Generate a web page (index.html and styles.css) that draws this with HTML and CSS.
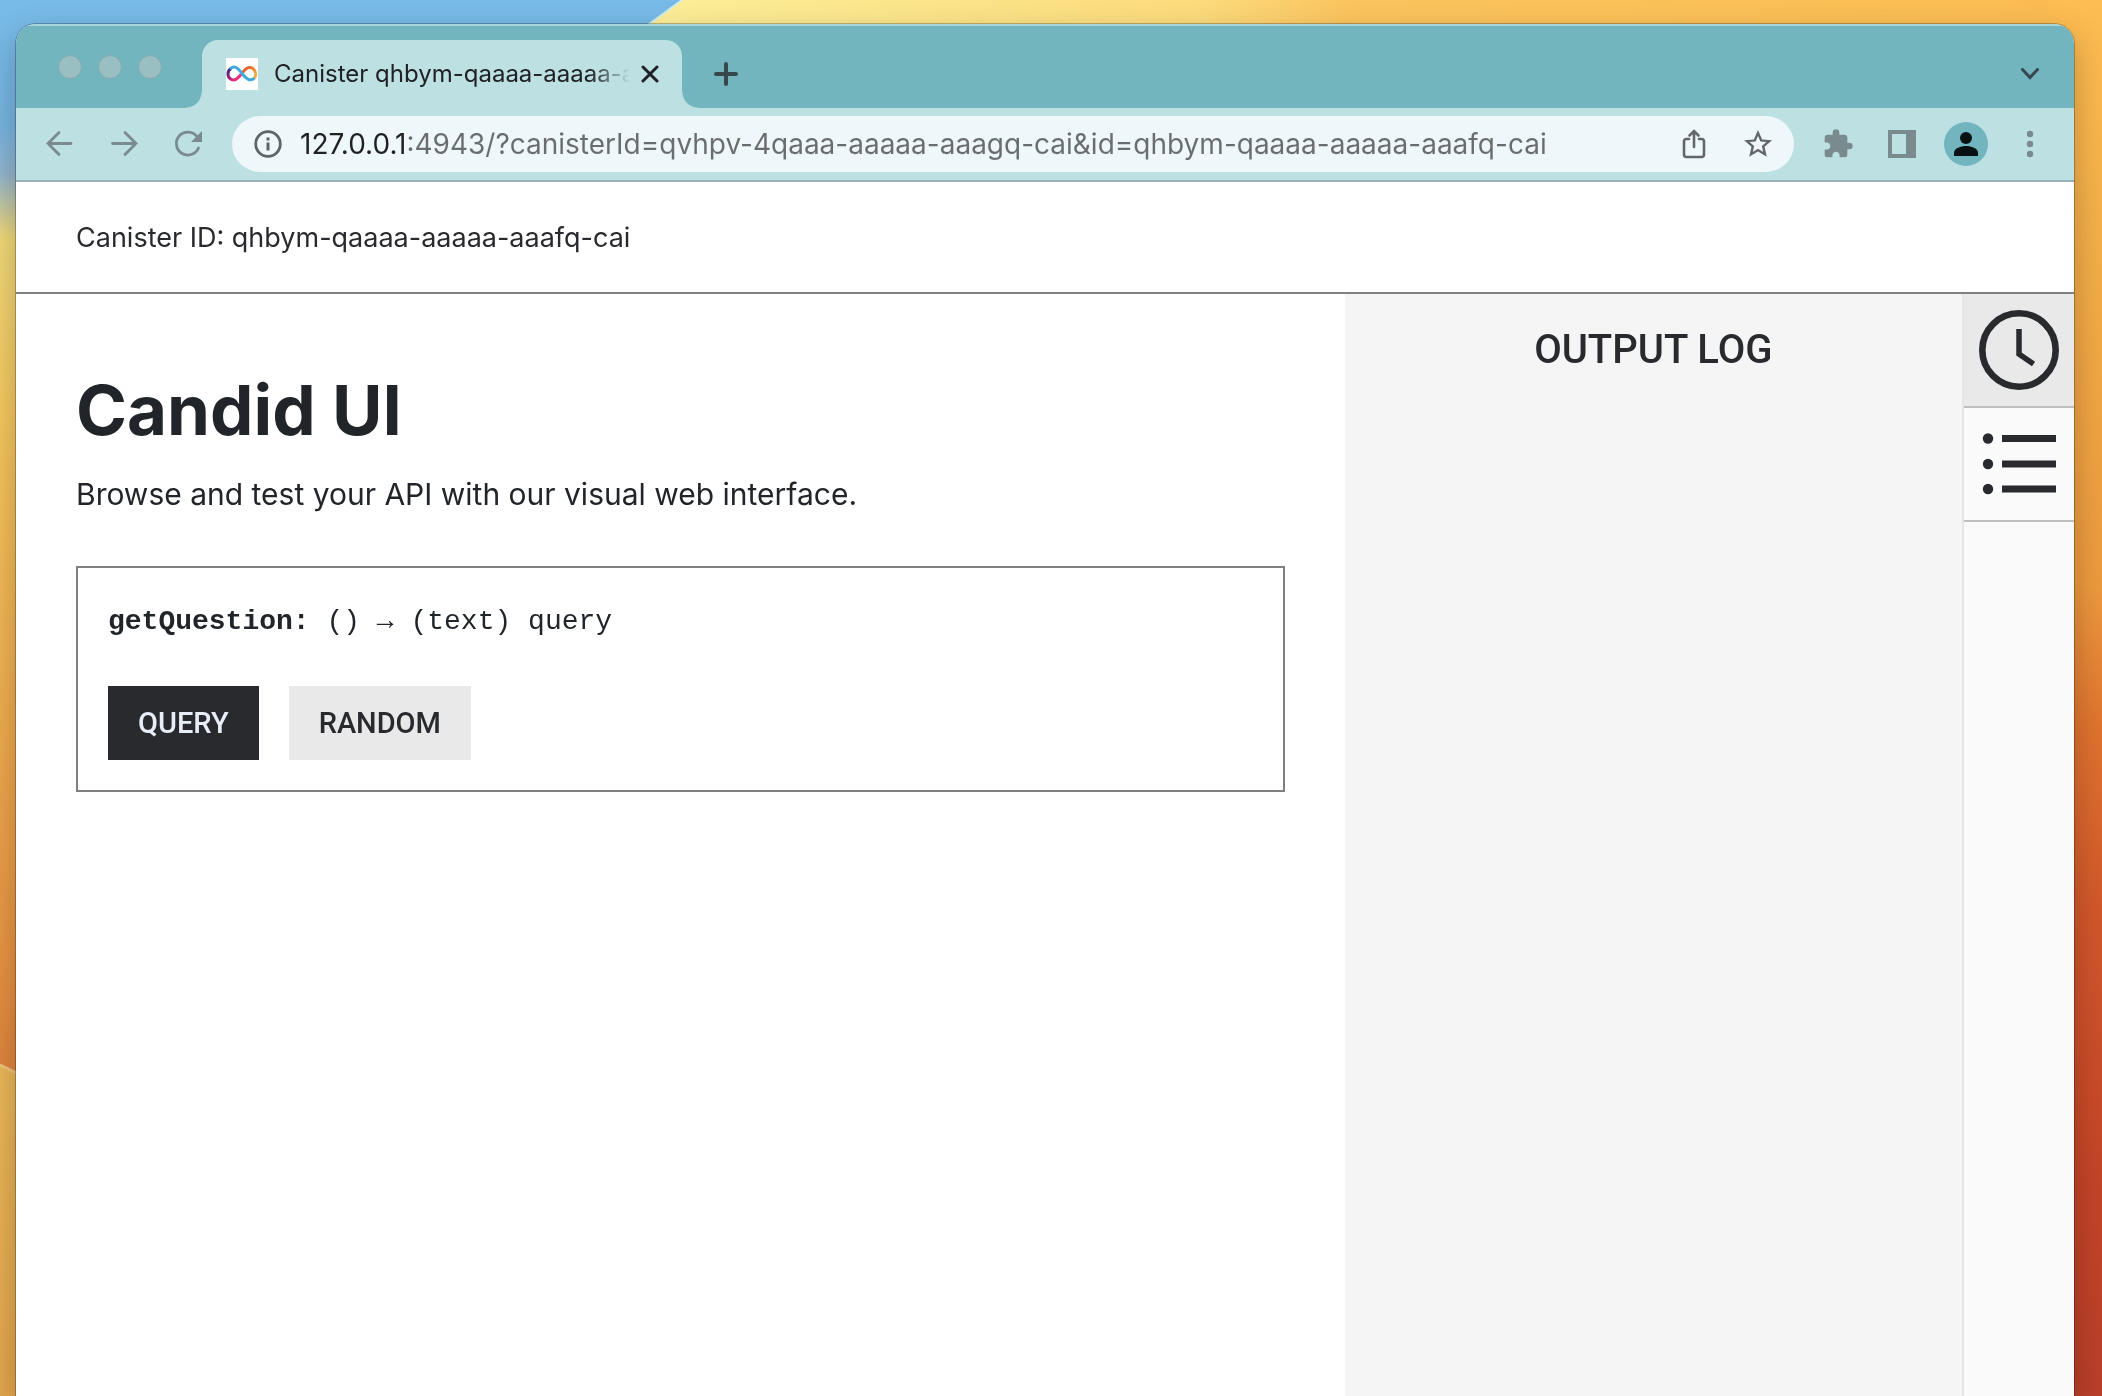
FILE: index.html
```html
<!DOCTYPE html>
<html lang="en">
<head>
<meta charset="utf-8">
<title>Candid UI</title>
<link rel="stylesheet" href="styles.css">
</head>
<body class="desktop">
<svg class="wallpaper" viewBox="0 0 2102 1396" preserveAspectRatio="none" aria-hidden="true">
  <defs>
    <linearGradient id="sky" x1="0" y1="0" x2="0" y2="1">
      <stop offset="0" stop-color="#78bbe9"/>
      <stop offset="0.09" stop-color="#76b4e0"/>
      <stop offset="0.125" stop-color="#93b5cd"/>
      <stop offset="0.17" stop-color="#f0d878"/>
      <stop offset="0.3" stop-color="#f5c65e"/>
      <stop offset="0.5" stop-color="#efae50"/>
      <stop offset="0.68" stop-color="#e89443"/>
      <stop offset="0.77" stop-color="#df833c"/>
    </linearGradient>
    <linearGradient id="sun" x1="0" y1="0" x2="1" y2="0">
      <stop offset="0" stop-color="#fcf09a"/>
      <stop offset="0.4" stop-color="#fcdb7c"/>
      <stop offset="0.5" stop-color="#fbc45e"/>
      <stop offset="1" stop-color="#fbbc52"/>
    </linearGradient>
    <linearGradient id="dusk" x1="0" y1="0" x2="0" y2="1">
      <stop offset="0" stop-color="#fdbd52"/>
      <stop offset="0.22" stop-color="#f2ab46"/>
      <stop offset="0.42" stop-color="#ed9a3e"/>
      <stop offset="0.52" stop-color="#e0742f"/>
      <stop offset="0.65" stop-color="#d2582b"/>
      <stop offset="0.85" stop-color="#c44428"/>
      <stop offset="1" stop-color="#ba3f2a"/>
    </linearGradient>
    <linearGradient id="sand" x1="0" y1="0" x2="0" y2="1">
      <stop offset="0" stop-color="#eab758"/>
      <stop offset="1" stop-color="#e3a64d"/>
    </linearGradient>
  </defs>
  <rect width="2102" height="1396" fill="url(#sky)"/>
  <path d="M682 0H2102V60H600z" fill="url(#sun)"/>
  <path d="M682 0L600 60" stroke="#cfeeea" stroke-width="2"/>
  <rect x="2050" width="52" height="1396" fill="url(#dusk)"/>
  <path d="M0 1064L40 1083V1396H0z" fill="url(#sand)"/>
  <path d="M0 1065L40 1084" stroke="#efc478" stroke-width="3"/>
</svg>

<div class="window">
  <div class="tabstrip">
    <div class="lights" aria-hidden="true"><span class="light"></span><span class="light"></span><span class="light"></span></div>
    <div class="tab">
      <svg class="favicon" viewBox="0 0 32 32" aria-hidden="true">
        <defs>
          <linearGradient id="loopL" x1="0" y1="0" x2="1" y2="1"><stop offset="0.1" stop-color="#4a2585"/><stop offset="0.75" stop-color="#ea2c7c"/></linearGradient>
          <linearGradient id="loopR" x1="0" y1="0" x2="1" y2="1"><stop offset="0.2" stop-color="#e8602c"/><stop offset="0.8" stop-color="#f3ae42"/></linearGradient>
        </defs>
        <rect width="32" height="32" fill="#fff"/>
        <g fill="none" stroke-width="3">
          <path d="M5 10.500C1 13 1 19 5 21.300C9 23.500 12 20 15 16.500" stroke="url(#loopL)"/>
          <path d="M16.500 14.500C20 10 23 8 26.500 10.300C30.500 13 30.500 18 28 20.500" stroke="url(#loopR)"/>
          <path d="M4 11C8 6.500 12 10 16 15.500C20 21 24.500 24 28.500 20" stroke="#3fa9dc"/>
        </g>
      </svg>
      <span class="tab-title">Canister qhbym-qaaaa-aaaaa-aaafq-cai</span>
      <button class="tab-close" aria-label="Close tab">
        <svg width="18" height="18" viewBox="0 0 18 18"><path d="M2 2L16 16M16 2L2 16" stroke="#202124" stroke-width="3" stroke-linecap="round"/></svg>
      </button>
    </div>
    <button class="tool" aria-label="New tab">
      <svg width="24" height="24" viewBox="0 0 24 24"><path d="M12 2V22M2 12H22" stroke="#37474c" stroke-width="4" stroke-linecap="round"/></svg>
    </button>
    <button class="tool tab-search" aria-label="Search tabs">
      <svg width="18" height="12" viewBox="0 0 18 12"><path d="M1.500 1.500L9 9.500L16.500 1.500" fill="none" stroke="#37474c" stroke-width="3" stroke-linecap="round"/></svg>
    </button>
  </div>

  <div class="toolbar">
    <button class="tool" aria-label="Back">
      <svg width="28" height="28" viewBox="0 0 28 28"><path d="M25 13.500H2M13 2.500L2 13.500L13 24.500" fill="none" stroke="#7a8b8f" stroke-width="2.800" stroke-linecap="round"/></svg>
    </button>
    <button class="tool" aria-label="Forward">
      <svg width="28" height="28" viewBox="0 0 28 28"><path d="M2.500 13.500H26M15 2.500L26 13.500L15 24.500" fill="none" stroke="#7a8b8f" stroke-width="2.800" stroke-linecap="round"/></svg>
    </button>
    <button class="tool" aria-label="Reload">
      <svg width="28" height="28" viewBox="0 0 28 28"><path d="M23 6.500A11.500 11.500 0 1 0 24.500 18" fill="none" stroke="#7a8b8f" stroke-width="2.800" stroke-linecap="round"/><path d="M28 1V12H17z" fill="#7a8b8f"/></svg>
    </button>
    <div class="omnibox">
      <button class="site-info" aria-label="View site information">
        <svg width="28" height="28" viewBox="0 0 28 28"><circle cx="14" cy="14" r="12.300" fill="none" stroke="#5f6468" stroke-width="2.800"/><path d="M12.500 7.500h3v3h-3zM12.500 12.500h3v8h-3z" fill="#5f6468"/></svg>
      </button>
      <input class="url" type="text" aria-label="Address" spellcheck="false" value="127.0.0.1:4943/?canisterId=qvhpv-4qaaa-aaaaa-aaagq-cai&amp;id=qhbym-qaaaa-aaaaa-aaafq-cai">
      <button class="tool" aria-label="Share this page">
        <svg width="24" height="30" viewBox="0 0 24 30"><path d="M7 10H4.500Q2 10 2 12.500V25.500Q2 28 4.500 28H19.500Q22 28 22 25.500V12.500Q22 10 19.500 10H17M12 18V2.500M7.500 6.500L12 2L16.500 6.500" fill="none" stroke="#63666a" stroke-width="2.600" stroke-linecap="round"/></svg>
      </button>
      <button class="tool" aria-label="Bookmark this tab">
        <svg width="32" height="32" viewBox="0 0 24 24"><path d="M22.500 9.240l-7.400-.64L12 1.500 8.900 8.610l-7.400.63 5.600 4.870L5.420 21.500 12 17.570l6.580 3.930-1.670-7.390 5.590-4.870zM12 15.600l-3.900 2.350 1.040-4.450-3.440-2.980 4.540-.4L12 5.900l1.770 4.230 4.540.4-3.440 2.980 1.040 4.450L12 15.600z" fill="#63666a"/></svg>
      </button>
    </div>
    <button class="tool" aria-label="Extensions">
      <svg width="32" height="32" viewBox="0 0 24 24"><path d="M20.500 11H19V7c0-1.100-.9-2-2-2h-4V3.500a2.500 2.500 0 0 0-5 0V5H4c-1.100 0-1.990.9-1.990 2v3.800H3.500c1.490 0 2.700 1.210 2.700 2.700s-1.210 2.700-2.700 2.700H2V20c0 1.100.9 2 2 2h3.800v-1.500c0-1.490 1.210-2.700 2.700-2.700s2.700 1.210 2.700 2.700V22H17c1.100 0 2-.9 2-2v-4h1.500a2.500 2.500 0 0 0 0-5z" fill="#7a8b8f"/></svg>
    </button>
    <button class="tool" aria-label="Side panel">
      <svg width="28" height="28" viewBox="0 0 28 28"><path d="M0 0H28V28H0zM4 4V24H18V4z" fill="#7a8b8f" fill-rule="evenodd"/></svg>
    </button>
    <button class="tool" aria-label="Profile">
      <svg width="44" height="44" viewBox="0 0 44 44"><circle cx="22" cy="22" r="22" fill="#72b5bf"/><circle cx="22" cy="16" r="6" fill="#081214"/><path d="M10 34V31C10 26 17 24 22 24S34 26 34 31V34z" fill="#081214"/></svg>
    </button>
    <button class="tool" aria-label="Menu">
      <svg width="8" height="28" viewBox="0 0 8 28"><g fill="#7a8b8f"><circle cx="4" cy="4" r="3.200"/><circle cx="4" cy="14" r="3.200"/><circle cx="4" cy="24" r="3.200"/></g></svg>
    </button>
  </div>

  <header class="canister">Canister ID: qhbym-qaaaa-aaaaa-aaafq-cai</header>

  <div class="page">
    <main class="main">
      <h1 class="title">Candid UI</h1>
      <p class="lead">Browse and test your API with our visual web interface.</p>
      <section class="method">
        <div class="signature"><b>getQuestion:</b> () → (text) query</div>
        <div class="actions">
          <button class="btn btn-query">QUERY</button>
          <button class="btn">RANDOM</button>
        </div>
      </section>
    </main>
    <aside class="log">
      <h2 class="log-title">OUTPUT LOG</h2>
    </aside>
    <nav class="rail" aria-label="Panels">
      <button class="rail-btn rail-active" aria-label="Output log">
        <svg width="80" height="80" viewBox="0 0 80 80"><circle cx="40" cy="40" r="36.700" fill="none" stroke="#292a2e" stroke-width="6.600"/><path d="M40 19V44L54.500 54" fill="none" stroke="#292a2e" stroke-width="5.500"/></svg>
      </button>
      <button class="rail-btn" aria-label="Methods">
        <svg width="80" height="80" viewBox="0 0 80 80"><g fill="#292a2e"><circle cx="9" cy="14.500" r="5.200"/><circle cx="9" cy="40" r="5.200"/><circle cx="9" cy="65" r="5.200"/><path d="M23 11H77V18H23zM23 36.500H77V43.500H23zM23 61.500H77V68.500H23z"/></g></svg>
      </button>
    </nav>
  </div>
</div>
</body>
</html>
```
FILE: styles.css
```css
* {
  box-sizing: border-box;
}

.desktop {
  display: flex;
  min-height: 100vh;
  margin: 0;
  padding: 24px 28px 0 16px;
  background: #efae50;
  color: #212529;
  font-family: Inter, "Liberation Sans", sans-serif;
}

.wallpaper {
  position: fixed;
  inset: 0;
  z-index: -1;
  width: 100%;
  height: 100%;
}

button {
  display: flex;
  align-items: center;
  justify-content: center;
  margin: 0;
  padding: 0;
  border: 0;
  background: none;
  color: inherit;
  font: inherit;
}

/* Browser window */

.window {
  display: flex;
  flex: 1;
  flex-direction: column;
  min-width: 0;
  overflow: hidden;
  border-radius: 20px 20px 0 0;
  background: #fff;
  box-shadow: 0 0 0 1px rgba(0, 0, 0, 0.25), 0 12px 32px rgba(0, 0, 0, 0.25);
}

.tabstrip {
  display: flex;
  align-items: flex-end;
  height: 84px;
  padding: 0 12px 0 42px;
  background: #72b5bf;
  box-shadow: inset 0 2px #a9d5d9;
}

.lights {
  display: flex;
  gap: 16px;
  width: 144px;
  padding-bottom: 29px;
}

.light {
  width: 24px;
  height: 24px;
  border: 1px solid #83a9ad;
  border-radius: 50%;
  background: #99bfc3;
}

.tab {
  position: relative;
  display: flex;
  align-items: center;
  width: 480px;
  height: 68px;
  padding: 0 16px 0 24px;
  border-radius: 16px 16px 0 0;
  background: #bde0e2;
}

.tab::before,
.tab::after {
  content: "";
  position: absolute;
  bottom: 0;
  width: 16px;
  height: 16px;
}

.tab::before {
  right: 100%;
  background: radial-gradient(circle at 0 0, #72b5bf 15px, #bde0e2 16px);
}

.tab::after {
  left: 100%;
  background: radial-gradient(circle at 100% 0, #72b5bf 15px, #bde0e2 16px);
}

.favicon {
  flex: none;
  width: 32px;
  height: 32px;
}

.tab-title {
  flex: 1;
  overflow: hidden;
  margin: 0 4px 0 16px;
  color: #202124;
  font-size: 24px;
  line-height: 32px;
  white-space: nowrap;
  -webkit-mask-image: linear-gradient(to left, transparent, #000 40px);
  mask-image: linear-gradient(to left, transparent, #000 40px);
}

.tab-close {
  width: 32px;
  height: 32px;
}

.tool {
  flex: none;
  width: 64px;
  height: 56px;
}

.tabstrip .tool {
  height: 68px;
  margin-left: 12px;
}

.tabstrip .tab-search {
  margin-left: auto;
}

.toolbar {
  display: flex;
  align-items: center;
  height: 74px;
  padding: 0 12px;
  border-bottom: 2px solid #98b1b6;
  background: #bde0e2;
}

.omnibox {
  display: flex;
  flex: 1;
  align-items: center;
  min-width: 0;
  height: 56px;
  margin: 0 12px;
  padding: 0 4px 0 16px;
  border-radius: 28px;
  background: #eef7f9;
}

.site-info {
  flex: none;
  width: 40px;
  height: 40px;
}

/* The host part of the address is darker than the path. */
.url {
  flex: 1;
  min-width: 0;
  height: 40px;
  margin: 0 0 0 12px;
  padding: 0;
  border: 0;
  outline: 0;
  background: linear-gradient(to right, #202124 107px, #696d70 107px);
  -webkit-background-clip: text;
  background-clip: text;
  color: #696d70;
  font: 28px/40px Inter, "Liberation Sans", sans-serif;
  -webkit-text-fill-color: transparent;
}

/* Candid page */

.canister {
  padding: 36px 60px 34px;
  border-bottom: 2px solid #808083;
  color: #292a2e;
  font-size: 27px;
  line-height: 40px;
}

.page {
  display: flex;
  flex: 1;
}

.main {
  flex: 1;
  min-width: 0;
  padding: 76px 60px 60px;
}

.title {
  margin: 0 0 20px;
  font-size: 69px;
  font-weight: 700;
  line-height: 80px;
}

.lead {
  margin: 0 0 48px;
  font-size: 30px;
  line-height: 48px;
}

.method {
  padding: 30px;
  border: 2px solid #808083;
}

.signature {
  margin-bottom: 40px;
  font-family: "Liberation Mono", monospace;
  font-size: 28px;
  line-height: 48px;
}

.actions {
  display: flex;
  gap: 30px;
}

.btn {
  height: 74px;
  padding: 0 30px;
  background: #e9e9e9;
  color: #292a2e;
  font: 500 29px/32px Roboto, sans-serif;
}

.btn-query {
  background: #292a2e;
  color: #e8edfa;
}

.log {
  flex: 0 0 30%;
  padding: 32px 40px;
  background: #f5f5f5;
}

.log-title {
  margin: 0;
  color: #292a2e;
  font: 500 40px/48px Roboto, sans-serif;
  text-align: center;
}

.rail {
  flex: none;
  width: 112px;
  border-left: 2px solid #e6e6e6;
  background: #fafafa;
}

.rail-btn {
  width: 100%;
  height: 114px;
  border-bottom: 2px solid #bfbfc0;
}

.rail-active {
  background: #e9e9e9;
}
```
